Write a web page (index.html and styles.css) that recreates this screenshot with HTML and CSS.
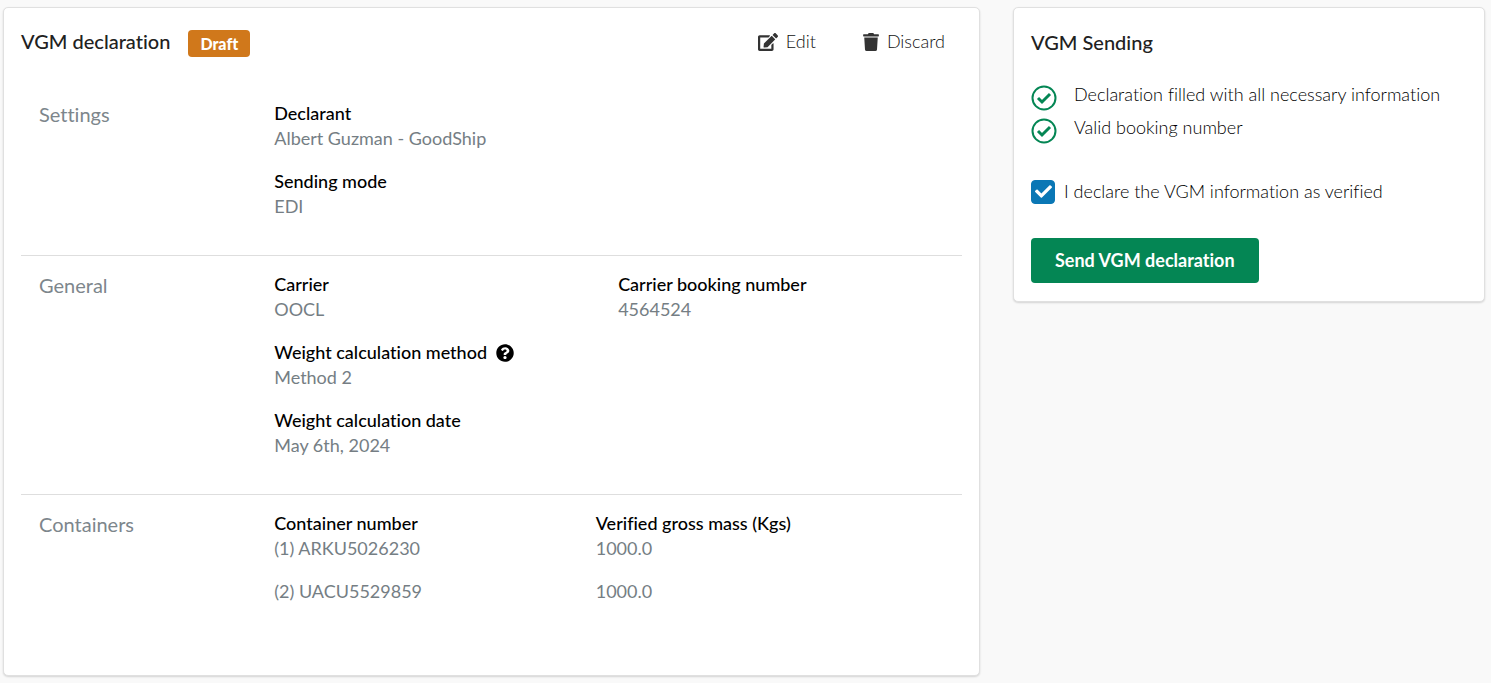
FILE: index.html
```html
<!DOCTYPE html>
<html lang="en">
<head>
  <meta charset="UTF-8" />
  <meta name="viewport" content="width=device-width, initial-scale=1.0"/>
  <title>VGM declaration</title>
  <link rel="stylesheet" href="styles.css">
</head>
<body>
  <main class="layout">
    <section class="card declaration">
      <header class="card-header">
        <h1 class="card-title">VGM declaration</h1>
        <span class="badge">Draft</span>
        <div class="actions">
          <button type="button" class="action">
            <svg class="icon-edit" viewBox="0 0 576 512" aria-hidden="true"><path d="M402.600 83.200l90.200 90.200c3.800 3.800 3.800 10 0 13.800L274.400 405.600l-92.800 10.300c-12.400 1.400-22.900-9.100-21.500-21.500l10.300-92.800L388.800 83.200c3.800-3.800 10-3.800 13.800 0zm162-22.900l-48.800-48.800c-15.200-15.200-39.900-15.200-55.200 0l-35.400 35.400c-3.800 3.800-3.800 10 0 13.800l90.200 90.200c3.800 3.800 10 3.800 13.800 0l35.400-35.400c15.200-15.300 15.200-40 0-55.200zM384 346.200V448H64V128h229.800c3.200 0 6.200-1.300 8.500-3.500l40-40c7.600-7.600 2.200-20.500-8.500-20.500H48C21.500 64 0 85.500 0 112v352c0 26.500 21.500 48 48 48h352c26.500 0 48-21.500 48-48V306.200c0-10.700-12.900-16-20.500-8.500l-40 40c-2.200 2.300-3.500 5.300-3.500 8.500z"/></svg>
            Edit
          </button>
          <button type="button" class="action">
            <svg class="icon-trash" viewBox="0 0 448 512" aria-hidden="true"><path d="M432 32H312l-9.400-18.700A24 24 0 0 0 281.100 0H166.800a23.700 23.700 0 0 0-21.400 13.300L136 32H16A16 16 0 0 0 0 48v32a16 16 0 0 0 16 16h416a16 16 0 0 0 16-16V48a16 16 0 0 0-16-16zM32 128l21.200 339a48 48 0 0 0 47.900 45h245.800a48 48 0 0 0 47.900-45L416 128z"/></svg>
            Discard
          </button>
        </div>
      </header>

      <div class="section">
        <h2 class="section-title">Settings</h2>
        <dl class="fields">
          <div class="field">
            <dt>Declarant</dt>
            <dd>Albert Guzman - GoodShip</dd>
          </div>
          <div class="field wide">
            <dt>Sending mode</dt>
            <dd>EDI</dd>
          </div>
        </dl>
      </div>

      <div class="section">
        <h2 class="section-title">General</h2>
        <dl class="fields">
          <div class="field">
            <dt>Carrier</dt>
            <dd>OOCL</dd>
          </div>
          <div class="field">
            <dt>Carrier booking number</dt>
            <dd>4564524</dd>
          </div>
          <div class="field wide">
            <dt>
              Weight calculation method
              <svg class="icon-help" viewBox="0 0 512 512" role="img" aria-label="Help"><path d="M504 256c0 137-111 248-248 248S8 393 8 256C8 119.100 119 8 256 8s248 111.100 248 248zM262.700 90c-54.500 0-89.300 23-116.500 63.800-3.500 5.300-2.400 12.400 2.700 16.300l34.700 26.300c5.200 3.900 12.600 3 16.700-2.100 17.900-22.700 30.100-35.800 57.300-35.800 20.400 0 45.700 13.100 45.700 33 0 15-12.400 22.700-32.500 34C247.100 238.500 216 254.900 216 296v4c0 6.600 5.400 12 12 12h56c6.600 0 12-5.400 12-12v-1.300c0-28.500 83.200-29.600 83.200-106.700 0-58-60.200-102-116.500-102zM256 338c-25.400 0-46 20.600-46 46s20.600 46 46 46 46-20.600 46-46-20.600-46-46-46z"/></svg>
            </dt>
            <dd>Method 2</dd>
          </div>
          <div class="field wide">
            <dt>Weight calculation date</dt>
            <dd>May 6th, 2024</dd>
          </div>
        </dl>
      </div>

      <div class="section">
        <h2 class="section-title">Containers</h2>
        <div class="table-wrap">
          <table class="containers">
            <thead>
              <tr>
                <th>Container number</th>
                <th>Verified gross mass (Kgs)</th>
              </tr>
            </thead>
            <tbody>
              <tr>
                <td>(1) ARKU5026230</td>
                <td>1000.0</td>
              </tr>
              <tr>
                <td>(2) UACU5529859</td>
                <td>1000.0</td>
              </tr>
            </tbody>
          </table>
        </div>
      </div>
    </section>

    <aside class="card sending">
      <h2 class="card-title">VGM Sending</h2>
      <ul class="checks">
        <li>
          <svg class="icon-check" viewBox="0 0 26 26" aria-hidden="true"><circle cx="13" cy="13" r="11.500"/><path d="M7 13l4 4 8-8"/></svg>
          Declaration filled with all necessary information
        </li>
        <li>
          <svg class="icon-check" viewBox="0 0 26 26" aria-hidden="true"><circle cx="13" cy="13" r="11.500"/><path d="M7 13l4 4 8-8"/></svg>
          Valid booking number
        </li>
      </ul>
      <label class="confirm" for="verified">
        <span class="checkbox">
          <input type="checkbox" id="verified" checked>
          <svg viewBox="0 0 512 512" aria-hidden="true"><path d="M173.900 439.400l-166.400-166.400c-10-10-10-26.200 0-36.200l36.200-36.200c10-10 26.200-10 36.200 0L192 312.700 432.100 72.600c10-10 26.200-10 36.200 0l36.200 36.200c10 10 10 26.200 0 36.200L210.100 439.400c-10 10-26.200 10-36.200 0z"/></svg>
        </span>
        I declare the VGM information as verified
      </label>
      <button type="button" class="send">Send VGM declaration</button>
    </aside>
  </main>
</body>
</html>
```
FILE: styles.css
```css
* {
  box-sizing: border-box;
}

body {
  margin: 0;
  background: #f9f9f9;
  color: #212121;
  font-family: Lato, "Liberation Sans", sans-serif;
  font-size: 18px;
  line-height: 25px;
  font-variant-ligatures: none;
}

h1, h2, dl, dd, ul {
  margin: 0;
  padding: 0;
}

button {
  font-family: inherit;
  font-size: 18px;
  line-height: 25px;
  font-variant-ligatures: inherit;
  cursor: pointer;
}

.layout {
  display: grid;
  grid-template-columns: 977fr 472fr;
  gap: 33px;
  align-items: start;
  padding: 7px 6px 7px 3px;
}

.card {
  background: #fff;
  border: 1px solid #e0e0e0;
  border-radius: 5px;
  box-shadow: 0 1px 2px rgba(0, 0, 0, 0.15);
}

.declaration {
  padding: 22px 17px 71px;
}

.card-title {
  font-size: 20px;
  font-weight: 500;
  line-height: 25px;
}

.card-header {
  display: flex;
  align-items: flex-start;
  margin-bottom: 28px;
}

.card-header .card-title {
  line-height: 23px;
}

.badge {
  margin-left: 18px;
  padding: 0 12px;
  border-radius: 4px;
  background: #d0781b;
  color: #fff;
  font-size: 16px;
  font-weight: 900;
  line-height: 27px;
}

.actions {
  display: flex;
  gap: 47px;
  margin-left: auto;
  padding-right: 17px;
}

.action {
  display: flex;
  align-items: center;
  gap: 8px;
  padding: 0;
  border: 0;
  background: none;
  color: #111;
  font-weight: 300;
  line-height: 23px;
}

.action svg {
  height: 18px;
  fill: #333;
}

.icon-edit {
  width: 20px;
}

.icon-trash {
  width: 16px;
}

.section {
  display: grid;
  grid-template-columns: 1fr 3fr;
  padding: 16px 0 36px;
}

.section + .section {
  border-top: 1px solid #dedede;
}

.section:last-child {
  padding-bottom: 0;
}

.section-title {
  padding: 1px 18px 0;
  color: #7d868c;
  font-size: 20px;
  font-weight: 400;
}

.fields {
  display: grid;
  grid-template-columns: 1fr 1fr;
  gap: 18px;
  padding: 0 18px;
}

.wide {
  grid-column: 1 / -1;
}

.field dt {
  display: flex;
  align-items: center;
  gap: 9px;
  color: #000;
  font-weight: 500;
}

.field dd {
  color: #757e84;
}

.icon-help {
  width: 18px;
  height: 18px;
  fill: #000;
}

.table-wrap {
  padding: 0 18px;
}

.containers {
  width: 100%;
  border-collapse: collapse;
  table-layout: fixed;
  text-align: left;
}

.containers th,
.containers td {
  padding: 0;
}

.containers th {
  color: #000;
  font-weight: 500;
}

.containers th:first-child {
  width: 48%;
}

.containers td {
  padding-bottom: 18px;
  color: #757e84;
}

.containers tr:last-child td {
  padding-bottom: 0;
}

.sending {
  padding: 22px 17px 18px;
}

.checks {
  display: flex;
  flex-direction: column;
  gap: 3px;
  margin-top: 26px;
  list-style: none;
  color: #000;
  font-weight: 300;
}

.checks li {
  display: flex;
  align-items: flex-start;
  gap: 17px;
  line-height: 26px;
}

.icon-check {
  flex: none;
  width: 26px;
  height: 26px;
  margin-top: 4px;
  fill: none;
  stroke: #048654;
  stroke-width: 2;
}

.icon-check path {
  stroke-width: 3;
}

.confirm {
  display: flex;
  align-items: center;
  gap: 9px;
  margin-top: 35px;
  color: #000;
  font-weight: 300;
}

.checkbox {
  display: grid;
}

.checkbox input,
.checkbox svg {
  grid-area: 1 / 1;
}

.checkbox input {
  appearance: none;
  width: 24px;
  height: 24px;
  margin: 0;
  border: 1px solid #0a77b5;
  border-radius: 4px;
}

.checkbox input:checked {
  background: #0a77b5;
}

.checkbox svg {
  place-self: center;
  width: 17px;
  height: 17px;
  fill: #fff;
  pointer-events: none;
}

.send {
  margin-top: 34px;
  padding: 10px 24px;
  border: 0;
  border-radius: 4px;
  background: #048654;
  color: #fff;
  font-weight: 700;
}

@media (max-width: 900px) {
  .layout {
    grid-template-columns: 1fr;
  }
}
```
